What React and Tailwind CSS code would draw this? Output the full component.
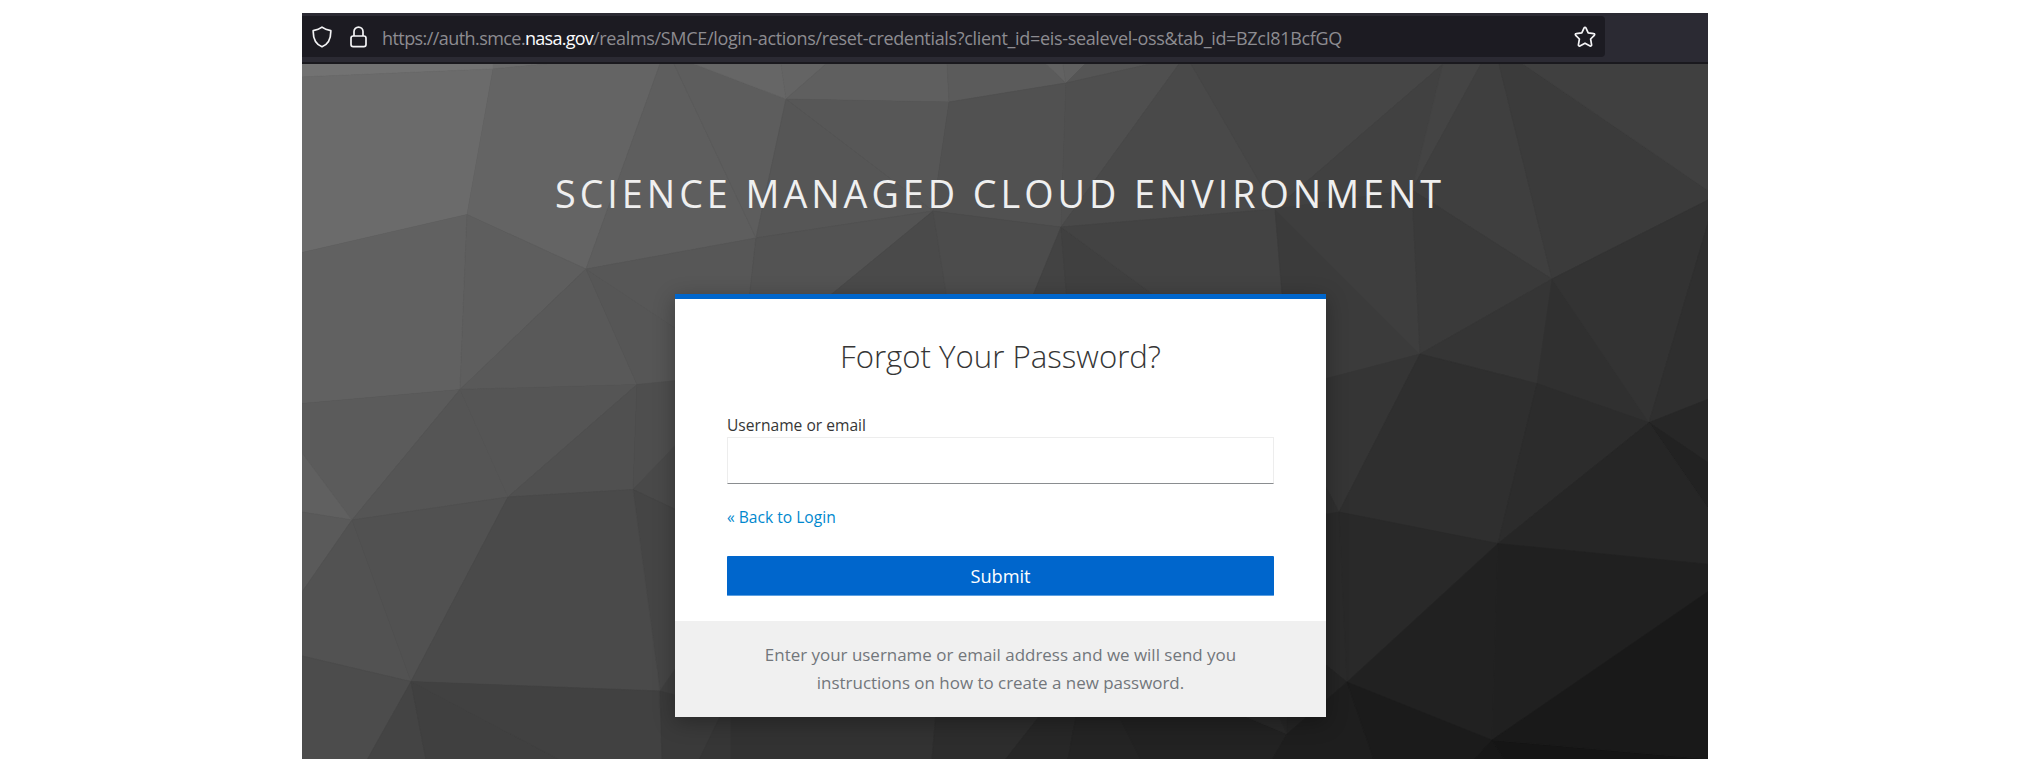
const FACETS = [
  ['302,64 493,64 493,69 302,77', '#727272'],
  ['493,64 547,64 493,69', '#6b6b6b'],
  ['302,77 493,69 467,214.5 302,252.5', '#6b6b6b'],
  ['493,69 547,64 660,64 586,269 467,214.5', '#646464'],
  ['660,64 674,64 756,238 586,269', '#5e5e5e'],
  ['674,64 694,64 786,99 756,238', '#5d5d5d'],
  ['694,64 781,64 786,99', '#666666'],
  ['781,64 826,64 786,99', '#646464'],
  ['826,64 947,64 949,102 786,99', '#5f5f5f'],
  ['786,99 949,102 933,211', '#575757'],
  ['786,99 933,211 756,238', '#565656'],
  ['947,64 1046,64 1066,83 949,102', '#5b5b5b'],
  ['1046,64 1063,64 1066,83', '#626262'],
  ['1063,64 1085,64 1066,83', '#606060'],
  ['1085,64 1150,64 1066,83', '#555555'],
  ['949,102 1066,83 1061,227 933,211', '#515151'],
  ['1066,83 1150,64 1179,64 1061,227', '#4f4f4f'],
  ['1179,64 1191,64 1275,209 1061,227', '#494949'],
  ['1191,64 1443,64 1275,209', '#464646'],
  ['1443,64 1412,190 1275,209', '#414141'],
  ['1443,64 1481,64 1412,190', '#444444'],
  ['1481,64 1499,64 1552,279 1412,190', '#3f3f3f'],
  ['1499,64 1523,64 1716,196 1552,279', '#3b3b3b'],
  ['1523,64 1716,64 1716,196', '#404040'],
  ['302,252.5 467,214.5 460,389.5 302,403.5', '#616161'],
  ['467,214.5 586,269 460,389.5', '#5e5e5e'],
  ['460,389.5 586,269 637,384.5', '#595959'],
  ['586,269 675,328 760,390 637,384.5', '#565656'],
  ['586,269 756,238 740,380 675,328', '#575757'],
  ['756,238 933,211 760,353 740,380', '#535353'],
  ['933,211 960,380 740,380 760,353', '#4a4a4a'],
  ['933,211 1061,227 990,400 960,380', '#4c4c4c'],
  ['1061,227 1075,400 990,400', '#434343'],
  ['1061,227 1290,395 1075,400', '#404040'],
  ['1061,227 1275,209 1290,395', '#434343'],
  ['1275,209 1420,354 1290,388', '#3b3b3b'],
  ['1275,209 1412,190 1420,354', '#3e3e3e'],
  ['1412,190 1552,279 1420,354', '#3a3a3a'],
  ['1552,279 1537,383.5 1420,354', '#353535'],
  ['1552,279 1649,422.5 1537,383.5', '#303030'],
  ['1552,279 1716,196 1649,422.5', '#333333'],
  ['1716,196 1716,396 1649,422.5', '#2f2f2f'],
  ['302,403.5 460,389.5 352,520 302,453', '#5b5b5b'],
  ['302,453 352,520 302,512', '#606060'],
  ['302,512 352,520 302,592', '#5a5a5a'],
  ['460,389.5 508,497 352,520', '#555555'],
  ['460,389.5 637,384.5 508,497', '#555555'],
  ['637,384.5 633,489.5 508,497', '#505050'],
  ['637,384.5 760,372 633,489.5', '#4e4e4e'],
  ['633,489.5 760,357 800,568', '#494949'],
  ['633,489.5 800,568 660,691', '#454545'],
  ['302,592 352,520 411,681.5 302,656', '#525252'],
  ['352,520 508,497 411,681.5', '#515151'],
  ['508,497 633,489.5 660,691 411,681.5', '#4a4a4a'],
  ['302,656 411,681.5 367,760 302,760', '#4c4c4c'],
  ['411,681.5 426,760 367,760', '#444444'],
  ['411,681.5 560,760 426,760', '#404040'],
  ['411,681.5 660,691 662,760 560,760', '#414141'],
  ['660,691 750,560 750,715 ', '#3f3f3f'],
  ['660,691 750,715 728,718 699,760 662,760', '#3a3a3a'],
  ['728,700 731,718 731,760 699,760', '#363636'],
  ['731,700 937,700 932,760 731,760', '#323232'],
  ['937,700 1052,700 1005,760 932,760', '#2d2d2d'],
  ['1052,700 1079,700 1068,760 1005,760', '#272727'],
  ['1079,700 1111,700 1141,760 1068,760', '#242424'],
  ['1111,700 1205,700 1287,734 1272,760 1141,760', '#222222'],
  ['1205,700 1272,700 1287,734', '#292929'],
  ['1272,700 1325,700 1287,734', '#262626'],
  ['1420,354 1339,512 1290,420 1290,388', '#353535'],
  ['1290,420 1339,512 1290,520', '#303030'],
  ['1290,520 1339,512 1347,682 1290,636', '#2a2a2a'],
  ['1290,636 1347,682 1287,734', '#242424'],
  ['1420,354 1537,383.5 1498,543.5 1339,512', '#2f2f2f'],
  ['1537,383.5 1649,422.5 1498,543.5', '#2c2c2c'],
  ['1649,422.5 1716,396 1716,468', '#272727'],
  ['1649,422.5 1716,468 1716,520', '#222222'],
  ['1649,422.5 1716,520 1716,565 1498,543.5', '#262626'],
  ['1339,512 1498,543.5 1347,682', '#292929'],
  ['1498,543.5 1492,740 1347,682', '#212121'],
  ['1498,543.5 1716,565 1716,586 1492,740', '#202020'],
  ['1347,682 1374,760 1272,760 1287,734', '#1e1e1e'],
  ['1347,682 1492,740 1474,760 1374,760', '#1b1b1b'],
  ['1492,740 1505,760 1474,760', '#171717'],
  ['1492,740 1708,759 1505,760', '#151515'],
  ['1492,740 1716,586 1716,760 1708,759', '#191919'],
];

function Backdrop() {
  return (
    <svg
      className="absolute inset-0 h-full w-full"
      viewBox="302 64 1406 695"
      preserveAspectRatio="none"
      aria-hidden="true"
    >
      <rect x="302" y="64" width="1406" height="695" fill="#3a3a3a" />
      {FACETS.map(([points, color]) => (
        <polygon key={points} points={points} fill={color} stroke={color} strokeWidth="0.6" />
      ))}
    </svg>
  );
}

function ShieldIcon() {
  return (
    <svg className="h-[22px] w-5 shrink-0" viewBox="0 0 20 22" fill="none" stroke="#f4f4f6" strokeWidth="1.7" strokeLinejoin="round">
      <path d="M10 1.2 C8 2.8 4.8 4 1.2 4.6 C1 12 3 18 10 20.8 C17 18 19 12 18.8 4.6 C15.2 4 12 2.8 10 1.2 Z" />
    </svg>
  );
}

function LockIcon() {
  return (
    <svg className="h-[22px] w-[17px] shrink-0" viewBox="0 0 17 22" fill="none" stroke="#f4f4f6" strokeWidth="1.7">
      <rect x="1" y="10" width="15" height="10.6" rx="2.2" />
      <path d="M4 10 V5.6 a4.5 4.5 0 0 1 9 0 V10" />
    </svg>
  );
}

function StarIcon() {
  return (
    <svg className="h-[22px] w-[22px] shrink-0" viewBox="0 0 22 22" fill="none" stroke="#f4f4f6" strokeWidth="1.7" strokeLinejoin="round">
      <path d="M10.1 1.9 a1 1 0 0 1 1.8 0 L14.2 6.9 L19.8 7.6 a.95 .95 0 0 1 .5 1.7 L16.6 13 L17.6 18.9 a1 1 0 0 1-1.5 1 L11 17.2 L5.9 19.9 a1 1 0 0 1-1.5-1 L5.4 13 L1.7 9.3 a.95 .95 0 0 1 .5-1.7 L7.8 6.9 Z" />
    </svg>
  );
}

export default function App() {
  return (
    <div className="h-[769px] w-[2018px] overflow-hidden bg-white pl-[302px] pt-[13px] font-['Open_Sans',sans-serif]">
      <div className="flex h-[746px] w-[1406px] flex-col overflow-hidden">
        <header className="h-[51px] shrink-0 border-b-2 border-[#1a191e] bg-[#2b2a33] pt-[3px]">
          <div className="flex h-[41px] w-[1303px] items-center rounded-r bg-[#1c1b22] pl-[10px] pr-[9px]">
            <ShieldIcon />
            <div className="w-[18px]" />
            <LockIcon />
            <div className="ml-[15px] flex-1 whitespace-nowrap pt-[3px] text-[18px] leading-6 text-[#8d8c91]">
              <span className="tracking-[-0.57px]">https://auth.smce.</span>
              <span className="tracking-[-0.75px] text-[#fbfbfe]">nasa.gov</span>
              <span className="tracking-[-0.33px]">/realms/SMCE/login-actions/reset-credentials?client_id=eis-sealevel-oss&amp;tab_id=BZcI81BcfGQ</span>
            </div>
            <StarIcon />
          </div>
        </header>

        <main className="relative min-h-0 flex-1 overflow-hidden">
          <Backdrop />
          <div className="relative flex flex-col">
            <h1 className="ml-[253px] mt-[102px] h-[56px] whitespace-nowrap text-[37.7px] leading-[56px] tracking-[3.98px] text-[#efefef]">
              SCIENCE MANAGED CLOUD ENVIRONMENT
            </h1>

            <section className="ml-[373px] mt-[72px] flex h-[423px] w-[651px] flex-col border-t-[5px] border-[#0066cc] bg-white shadow-[0_5px_20px_rgba(0,0,0,0.3)]">
              <h2 className="mt-[35px] h-[44px] whitespace-nowrap text-center text-[31.2px] font-light leading-[44px] text-[#363636]">
                Forgot Your Password?
              </h2>
              <form className="flex flex-col px-[52px]" onSubmit={(e) => e.preventDefault()}>
                <label htmlFor="username" className="mt-[35px] h-6 whitespace-nowrap text-[15.6px] leading-6 text-[#363636]">
                  Username or email
                </label>
                <input
                  id="username"
                  className="h-[47px] border border-[#ededed] border-b-[#8a8d90] px-2 outline-none"
                />
                <a href="#login" className="mt-[21px] h-6 self-start whitespace-nowrap text-[15.6px] leading-6 text-[#0088ce]">
                  « Back to Login
                </a>
                <button className="mt-[27px] h-[40px] rounded-[1px] border-b border-[#5c9fe0] bg-[#0066cc] text-[18.2px] leading-[38px] text-white">
                  Submit
                </button>
              </form>
              <p className="mt-auto h-[96px] bg-[#f0f0f0] pt-[20px] text-center text-[16.95px] leading-[28px] text-[#72767b]">
                Enter your username or email address and we will send you
                <br />
                instructions on how to create a new password.
              </p>
            </section>
          </div>
        </main>
      </div>
    </div>
  );
}
